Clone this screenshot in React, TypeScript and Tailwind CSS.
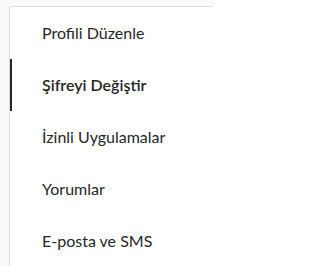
const ITEMS = [
  "Profili Düzenle",
  "Şifreyi Değiştir",
  "İzinli Uygulamalar",
  "Yorumlar",
  "E-posta ve SMS",
];

const ACTIVE = 1;

export default function App() {
  return (
    <div className="h-[266px] w-[213px] overflow-hidden bg-[#fafafa] pl-[9px] pt-[6px] font-['Segoe_UI','Lato',sans-serif]">
      <ul className="h-[300px] w-[260px] rounded-tl-[3px] border-l border-t border-[#dbdbdb] bg-white">
        {ITEMS.map((label, i) => (
          <li
            key={label}
            className={
              "border-l-2 py-4 pl-[30px] pr-4 text-[16px] leading-5 text-[#262626] " +
              (i === ACTIVE ? "border-[#262626] font-semibold" : "border-transparent")
            }
          >
            {label}
          </li>
        ))}
      </ul>
    </div>
  );
}
